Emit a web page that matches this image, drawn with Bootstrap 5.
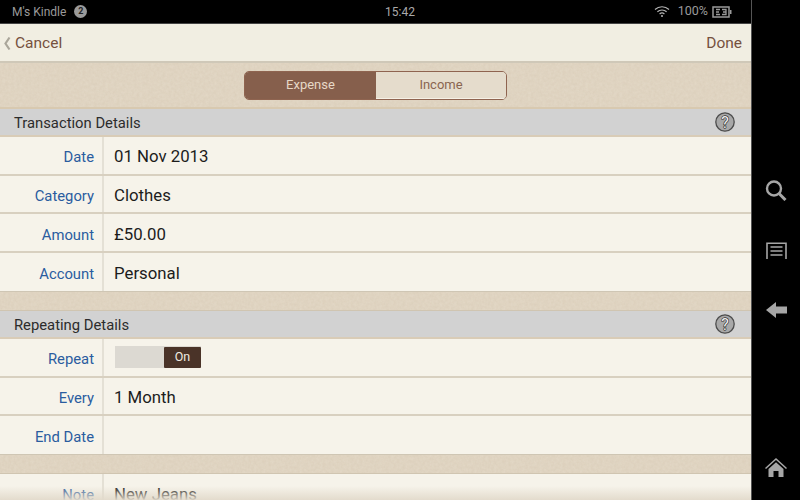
<!DOCTYPE html>
<html lang="en">
<head>
    <meta charset="UTF-8">
    <meta name="viewport" content="width=device-width, initial-scale=1.0">
    <title>Edit Transaction</title>
    <link href="https://cdn.jsdelivr.net/npm/bootstrap@5.3.3/dist/css/bootstrap.min.css" rel="stylesheet">
    <style>
        html, body { height: 500px; overflow: hidden; background: #000; }
        body { font-family: Roboto, "Liberation Sans", sans-serif; }
        .device { width: 800px; height: 500px; }
        .screen { width: 751px; height: 500px; }

        .status-bar { height: 23px; background: #000; color: #9a9a9a; font-size: 12px; padding: 0 19px 0 12px; border-bottom: 1px solid #444; box-sizing: content-box; }
        .status-time { left: 400px; top: 50%; color: #aaa; font-size: 12px; }
        .status-pct { font-size: 12.5px; }
        .notif-count { width: 13px; height: 13px; border-radius: 50%; background: #9a9a9a; color: #222; font-size: 9px; font-weight: 700; }

        .top-bar { height: 37px; background: #f1eee2; padding: 2px 9px 0 3px; font-size: 15.5px; color: #76513e; flex: none; }
        .top-shadow { height: 2px; background: #cfc8b8; flex: none; }
        .band { background-color: #e2d7c5; background-image: url("data:image/svg+xml,%3Csvg xmlns='http://www.w3.org/2000/svg' width='240' height='120'%3E%3Cfilter id='n'%3E%3CfeTurbulence type='fractalNoise' baseFrequency='.35' numOctaves='3'/%3E%3CfeColorMatrix values='0 0 0 0 .55 0 0 0 0 .45 0 0 0 0 .32 0 0 0 .28 -.04'/%3E%3C/filter%3E%3Crect width='240' height='120' filter='url(%23n)'/%3E%3C/svg%3E"); flex: none; }
        .band-top { height: 46px; border-bottom: 2px solid #d8c9b0; }
        .band-gap { height: 20px; border-top: 1px solid #cfc6b4; border-bottom: 1px solid #d0c5b1; }

        .seg { width: 263px; height: 29px; border: 1.5px solid #8f6450; border-radius: 5px; overflow: hidden; font-size: 13px; }
        .seg-on { width: 132px; background: #865f4c; color: #e6d8c6; }
        .seg-off { width: 131px; background: #e5dccc; color: #8a6550; border-bottom: 1px solid #f6f1e6; }

        .sec-head { height: 26px; background: #d2d2d2; color: #2c2c2c; font-size: 14.8px; padding: 0 16px 0 14px; flex: none; }
        .sec-title { padding-top: 3px; }
        .sec-line { height: 2px; background: #d9ccb7; flex: none; }

        .form-row { height: 38.7px; background: #f6f3ea; border-bottom: 2px solid #d8d0c0; flex: none; }
        .form-row.last-row { height: 38px; border-bottom: 0; }
        .row-label { width: 104px; height: 100%; padding: 4px 8px 0 0; border-right: 2px solid #e4e0d5; color: #2a5c9f; font-size: 14.8px; }
        .row-value { padding: 3px 0 0 10px; color: #1c1c1c; font-size: 16.8px; }
        .row-value.toggle-cell { padding-top: 0; }

        .repeat-toggle { width: 86px; height: 22px; margin-left: 1px; background: #dcd9d2; }
        .repeat-on { width: 37px; height: 21px; background: #4a3328; color: #f0ebe2; font-size: 12.5px; border-radius: 1px; }

        .bottom-fade { left: 0; right: 0; bottom: 0; height: 14px; background: linear-gradient(to bottom, rgba(226, 218, 203, 0), rgba(226, 218, 203, .95)); }
        .side-bar { width: 49px; height: 500px; background: #000; border-left: 1px solid #555; padding: 180px 0 23px; }
        .side-bar svg { display: block; }
        .list-icon { margin-top: 41px; }
        .arrow-icon { margin-top: 43px; }
    </style>
</head>
<body>
<div class="device d-flex">
    <div class="screen d-flex flex-column position-relative overflow-hidden">
        <div class="status-bar d-flex align-items-center justify-content-between position-relative flex-shrink-0">
            <div class="d-flex align-items-center gap-2">
                <span>M's Kindle</span>
                <span class="notif-count d-flex align-items-center justify-content-center">2</span>
            </div>
            <span class="status-time position-absolute translate-middle">15:42</span>
            <div class="d-flex align-items-center">
                <svg width="16" height="13" viewBox="0 0 16 13" fill="none" stroke="#b5b5b5" stroke-width="1.2">
                    <path d="M1 4.500C5 .8 11 .8 15 4.500"/>
                    <path d="M3.400 6.800C6 4.400 10 4.400 12.600 6.800"/>
                    <path d="M5.600 9C7 7.800 9 7.800 10.400 9"/>
                    <circle cx="8" cy="11" r="1" fill="#b5b5b5" stroke="none"/>
                </svg>
                <span class="status-pct ms-2">100%</span>
                <svg class="ms-1" width="20" height="12" viewBox="0 0 20 12" fill="none">
                    <rect x="1" y="1" width="16" height="10" stroke="#9a9a9a" stroke-width="1.5"/>
                    <rect x="18" y="4" width="1.5" height="4" fill="#9a9a9a"/>
                    <path d="M4 3.500h4M4 6h3M4 8.500h4M10 3.500h4v5h-4M11 6h3" stroke="#9a9a9a" stroke-width="1.3"/>
                </svg>
            </div>
        </div>

        <div class="top-bar d-flex align-items-center justify-content-between">
            <div class="d-flex align-items-center gap-1">
                <svg width="8" height="15" viewBox="0 0 8 15" fill="none" stroke="#aaa69a" stroke-width="2.2"><path d="M6.500 1.500 2.500 7.500l4 6"/></svg>
                <span>Cancel</span>
            </div>
            <span>Done</span>
        </div>
        <div class="top-shadow"></div>

        <div class="band band-top d-flex align-items-center justify-content-center">
            <div class="seg d-flex">
                <div class="seg-on d-flex align-items-center justify-content-center">Expense</div>
                <div class="seg-off d-flex align-items-center justify-content-center">Income</div>
            </div>
        </div>

        <div class="sec-head d-flex align-items-center justify-content-between">
            <span class="sec-title">Transaction Details</span>
            <svg width="20" height="20" viewBox="0 0 20 20">
                <circle cx="10" cy="10" r="9.200" fill="#a8a8a8" stroke="#4c4c4c" stroke-width="1.300"/>
                <text x="10" y="15.500" text-anchor="middle" font-family="Roboto, sans-serif" font-size="16" fill="#f0f0f0" stroke="#2e2e2e" stroke-width="1.300" paint-order="stroke">?</text>
            </svg>
        </div>
        <div class="sec-line"></div>
        <div class="form-row d-flex align-items-center">
            <div class="row-label d-flex align-items-center justify-content-end">Date</div>
            <div class="row-value">01 Nov 2013</div>
        </div>
        <div class="form-row d-flex align-items-center">
            <div class="row-label d-flex align-items-center justify-content-end">Category</div>
            <div class="row-value">Clothes</div>
        </div>
        <div class="form-row d-flex align-items-center">
            <div class="row-label d-flex align-items-center justify-content-end">Amount</div>
            <div class="row-value">£50.00</div>
        </div>
        <div class="form-row last-row d-flex align-items-center">
            <div class="row-label d-flex align-items-center justify-content-end">Account</div>
            <div class="row-value">Personal</div>
        </div>
        <div class="band band-gap"></div>

        <div class="sec-head d-flex align-items-center justify-content-between">
            <span class="sec-title">Repeating Details</span>
            <svg width="20" height="20" viewBox="0 0 20 20">
                <circle cx="10" cy="10" r="9.200" fill="#a8a8a8" stroke="#4c4c4c" stroke-width="1.300"/>
                <text x="10" y="15.500" text-anchor="middle" font-family="Roboto, sans-serif" font-size="16" fill="#f0f0f0" stroke="#2e2e2e" stroke-width="1.300" paint-order="stroke">?</text>
            </svg>
        </div>
        <div class="sec-line"></div>
        <div class="form-row d-flex align-items-center">
            <div class="row-label d-flex align-items-center justify-content-end">Repeat</div>
            <div class="row-value toggle-cell">
                <div class="repeat-toggle d-flex align-items-center justify-content-end">
                    <div class="repeat-on d-flex align-items-center justify-content-center">On</div>
                </div>
            </div>
        </div>
        <div class="form-row d-flex align-items-center">
            <div class="row-label d-flex align-items-center justify-content-end">Every</div>
            <div class="row-value">1 Month</div>
        </div>
        <div class="form-row last-row d-flex align-items-center">
            <div class="row-label d-flex align-items-center justify-content-end">End Date</div>
            <div class="row-value"></div>
        </div>
        <div class="band band-gap"></div>
        <div class="form-row d-flex align-items-center">
            <div class="row-label d-flex align-items-center justify-content-end">Note</div>
            <div class="row-value">New Jeans</div>
        </div>
        <div class="bottom-fade position-absolute"></div>
    </div>

    <div class="side-bar d-flex flex-column align-items-center">
        <svg width="22" height="21" viewBox="0 0 22 21" fill="none" stroke="#a6a6a6">
            <circle cx="9" cy="8.500" r="7" stroke-width="2.400"/>
            <path d="M14 13.500l6.500 6.500" stroke-width="3"/>
        </svg>
        <svg class="list-icon" width="21" height="17" viewBox="0 0 21 17" fill="none" stroke="#a6a6a6" stroke-width="1.600">
            <path d="M1 17V1.200h19V17"/>
            <path d="M4.500 5h12M4.500 9h12M4.500 13h12"/>
        </svg>
        <svg class="arrow-icon" width="21" height="16" viewBox="0 0 21 16" fill="#a6a6a6">
            <path d="M0 8 10 0v4.500h11v7H10V16z"/>
        </svg>
        <svg class="mt-auto" width="22" height="19" viewBox="0 0 22 19" fill="#a6a6a6">
            <path d="M11 0 22 10l-1 1L11 2 1 11l-1-1z"/>
            <path d="M3.500 11 11 4.200 18.500 11v8H13.500v-6h-5v6H3.500z"/>
        </svg>
    </div>
</div>
<script src="https://cdn.jsdelivr.net/npm/bootstrap@5.3.3/dist/js/bootstrap.bundle.min.js"></script>
</body>
</html>
